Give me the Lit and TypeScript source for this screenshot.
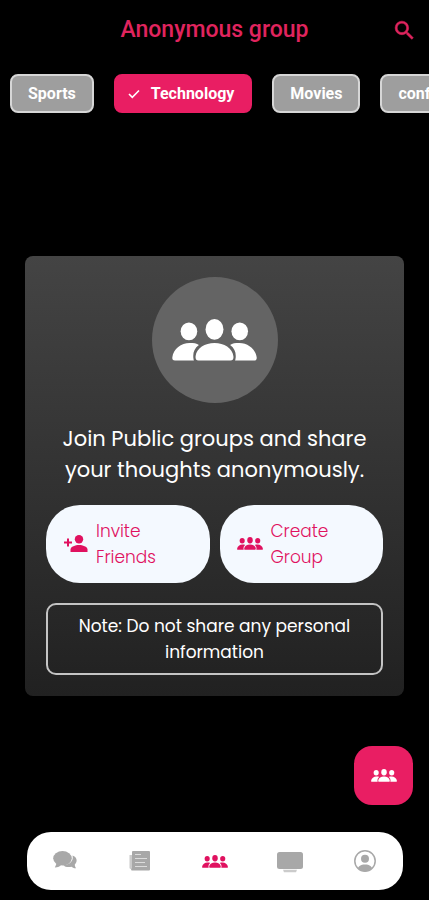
import { LitElement, html, css, svg } from "lit";
import { customElement, state } from "lit/decorators.js";

const groupIcon = html`<svg class="group" viewBox="0 0 256 126" fill="currentColor" aria-hidden="true">
  <ellipse cx="51" cy="37" rx="25" ry="27" />
  <ellipse cx="128" cy="31" rx="27" ry="31" />
  <ellipse cx="204" cy="37" rx="25" ry="27" />
  <path d="M53 72C66 72 74 73 81 78C69 87 64 98 64 111C64 117 65 121 66 125H9C3 125 0 121 1 115C4 90 28 72 53 72Z" />
  <path d="M203 72C190 72 182 73 175 78C187 87 192 98 192 111C192 117 191 121 190 125H247C253 125 256 121 255 115C252 90 228 72 203 72Z" />
  <path d="M128 72C157 72 182 87 185 112C186 120 183 125 176 125H80C73 125 70 120 71 112C74 87 99 72 128 72Z" />
</svg>`;

const searchIcon = html`<svg width="25" height="25" viewBox="0 0 24 24" fill="currentColor" stroke="currentColor" stroke-width="0.5" aria-hidden="true">
  <path d="M15.500 14h-.79l-.28-.27A6.470 6.470 0 0 0 16 9.500 6.500 6.500 0 1 0 9.500 16c1.610 0 3.090-.59 4.230-1.570l.27.28v.79l5 4.990L20.490 19l-4.990-5zm-6 0C7.010 14 5 11.990 5 9.500S7.010 5 9.500 5 14 7.010 14 9.500 11.990 14 9.500 14z" />
</svg>`;

const checkIcon = html`<svg width="12" height="10" viewBox="0 0 12 10" fill="none" stroke="currentColor" stroke-width="1.6" aria-hidden="true">
  <path d="M1 5L4.300 8.300L11 1.500" />
</svg>`;

const inviteIcon = html`<svg width="25" height="17" viewBox="-1 0 25 17" fill="currentColor" aria-hidden="true">
  <circle cx="15" cy="4.200" r="4.200" />
  <path d="M6.500 17V14.500C6.500 11.500 11.500 10 15 10S23.500 11.500 23.500 14.500V17Z" />
  <path d="M3 3.500h2v3h3v2h-3v3h-2v-3h-3v-2h3Z" />
</svg>`;

const tabs = [
  {
    label: "Chats",
    icon: svg`<path d="M20.500 5.500C25 7 26 11.500 22.800 14.500C22.700 16 23.300 17 24 18.200C21.800 18.300 20.500 17.500 19.500 16.700C16.500 17.500 13 17 11.200 15.200C17.500 15 22 11 20.500 5.500Z" />
      <ellipse cx="10.500" cy="8.300" rx="9.300" ry="7.300" />
      <path d="M4.500 11.500C4.600 14 3.800 15.500 2.800 17.500C6 17.500 8.200 16.300 9.500 14.500Z" />`,
  },
  {
    label: "Feed",
    icon: svg`<path d="M2.500 5H6V19H4A1.500 1.500 0 0 1 2.500 17.500Z" opacity="0.6" />
      <path d="M6 1H22A1 1 0 0 1 23 2V19.500A1 1 0 0 1 22 20.500H5A1 1 0 0 1 4 19.500L5 18V2A1 1 0 0 1 6 1Z" />
      <path d="M8 4.500H14M8 8.500H20M8 12.500H18M8 16.500H20" stroke="#dcdcdc" stroke-width="1.200" />`,
  },
  { label: "Groups", icon: null },
  {
    label: "Watch",
    icon: svg`<rect x="0" y="2" width="26" height="17" rx="2.500" />
      <path d="M6 19.800H20L19 22.300H7Z" opacity="0.6" />`,
  },
  {
    label: "Profile",
    icon: svg`<circle cx="13" cy="11" r="10.200" fill="none" stroke="currentColor" stroke-width="1.500" />
      <circle cx="13" cy="8.800" r="4" />
      <path d="M6 17.500C8 14.800 10.500 14.500 13 14.500S18 14.800 20 17.500C18.500 20 16 21.200 13 21.200S7.500 20 6 17.500Z" />`,
  },
];

@customElement("app-root")
export class AppRoot extends LitElement {
  @state() private topic = "Technology";
  @state() private tab = "Groups";

  static styles = css`
    :host {
      display: flex;
      flex-direction: column;
      min-height: 100vh;
      overflow: hidden;
      background: #000;
      color: #fff;
      font-family: Poppins, Inter, sans-serif;
    }
    * { box-sizing: border-box; }
    svg { display: block; flex: none; }
    button {
      margin: 0;
      padding: 0;
      border: 0;
      background: none;
      color: inherit;
      font: inherit;
      cursor: pointer;
    }
    header {
      display: grid;
      grid-template-columns: 1fr auto 1fr;
      align-items: center;
      height: 60px;
      padding: 0 12px;
      color: #e0245e;
    }
    h1 {
      grid-column: 2;
      margin: 0;
      font: 500 23px/32px Roboto, sans-serif;
    }
    .search { justify-self: end; }
    .chips {
      display: flex;
      gap: 20px;
      padding: 14px 10px 6px;
      overflow-x: auto;
      scrollbar-width: none;
    }
    .chip {
      display: flex;
      flex: none;
      align-items: center;
      gap: 11px;
      height: 39px;
      padding: 0 16px;
      border: 2px solid #d6d6d6;
      border-radius: 8px;
      background: #9e9e9e;
      font: 700 16px/20px Roboto, sans-serif;
    }
    .chip.on {
      padding: 0 16px 0 12px;
      border-color: #e91e63;
      background: #e91e63;
    }
    main {
      display: flex;
      flex: 1;
      flex-direction: column;
      justify-content: center;
      padding: 0 25px;
    }
    .card {
      display: flex;
      flex-direction: column;
      align-items: center;
      gap: 20px;
      padding: 21px;
      border-radius: 8px;
      background: linear-gradient(#444, #212121);
      text-align: center;
    }
    .badge {
      display: grid;
      place-items: center;
      width: 126px;
      height: 126px;
      border-radius: 50%;
      background: #646464;
    }
    .badge .group { width: 85px; height: 42px; }
    .lead {
      max-width: 320px;
      margin: 0;
      font-size: 21px;
      line-height: 31px;
    }
    .actions {
      display: grid;
      grid-template-columns: 1fr 1fr;
      gap: 10px;
      width: 100%;
    }
    .action {
      display: flex;
      align-items: center;
      gap: 8px;
      padding: 13px 17px;
      border-radius: 34px;
      background: #f4f9ff;
      color: #e0115f;
      font-size: 17px;
      font-weight: 300;
      line-height: 26px;
      text-align: left;
    }
    .action span { flex: 1; max-width: 80px; }
    .group { width: 26px; height: 13px; }
    .note {
      width: 100%;
      margin: 0;
      padding: 8px 24px;
      border: 2px solid #c4c4c4;
      border-radius: 10px;
      font-size: 17px;
      line-height: 26px;
    }
    footer {
      position: relative;
      padding: 0 26px 10px 27px;
    }
    .fab {
      position: absolute;
      right: 16px;
      bottom: 95px;
      display: grid;
      place-items: center;
      width: 59px;
      height: 59px;
      border-radius: 18px;
      background: #e91e63;
    }
    nav {
      display: grid;
      grid-template-columns: repeat(5, 1fr);
      height: 58px;
      border-radius: 24px;
      background: #fff;
    }
    .tab {
      display: grid;
      place-items: center;
      color: #a8a8a8;
    }
    .tab.on { color: #e0115f; }
  `;

  render() {
    return html`
      <header>
        <h1>Anonymous group</h1>
        <button class="search" aria-label="Search">${searchIcon}</button>
      </header>
      <div class="chips">
        ${["Sports", "Technology", "Movies", "confession"].map(
          (t) => html`<button
            class="chip ${t === this.topic ? "on" : ""}"
            aria-pressed=${t === this.topic}
            @click=${() => (this.topic = t)}
          >${t === this.topic ? checkIcon : null}<span>${t}</span></button>`
        )}
      </div>
      <main>
        <section class="card">
          <div class="badge">${groupIcon}</div>
          <p class="lead">Join Public groups and share your thoughts anonymously.</p>
          <div class="actions">
            <button class="action">${inviteIcon}<span>Invite Friends</span></button>
            <button class="action">${groupIcon}<span>Create Group</span></button>
          </div>
          <p class="note">Note: Do not share any personal information</p>
        </section>
      </main>
      <footer>
        <button class="fab" aria-label="New group">${groupIcon}</button>
        <nav>
          ${tabs.map(
            (t) => html`<button
              class="tab ${t.label === this.tab ? "on" : ""}"
              aria-label=${t.label}
              @click=${() => (this.tab = t.label)}
            >${t.icon
              ? html`<svg width="26" height="23" viewBox="0 0 26 23" fill="currentColor" aria-hidden="true">${t.icon}</svg>`
              : groupIcon}</button>`
          )}
        </nav>
      </footer>
    `;
  }
}
